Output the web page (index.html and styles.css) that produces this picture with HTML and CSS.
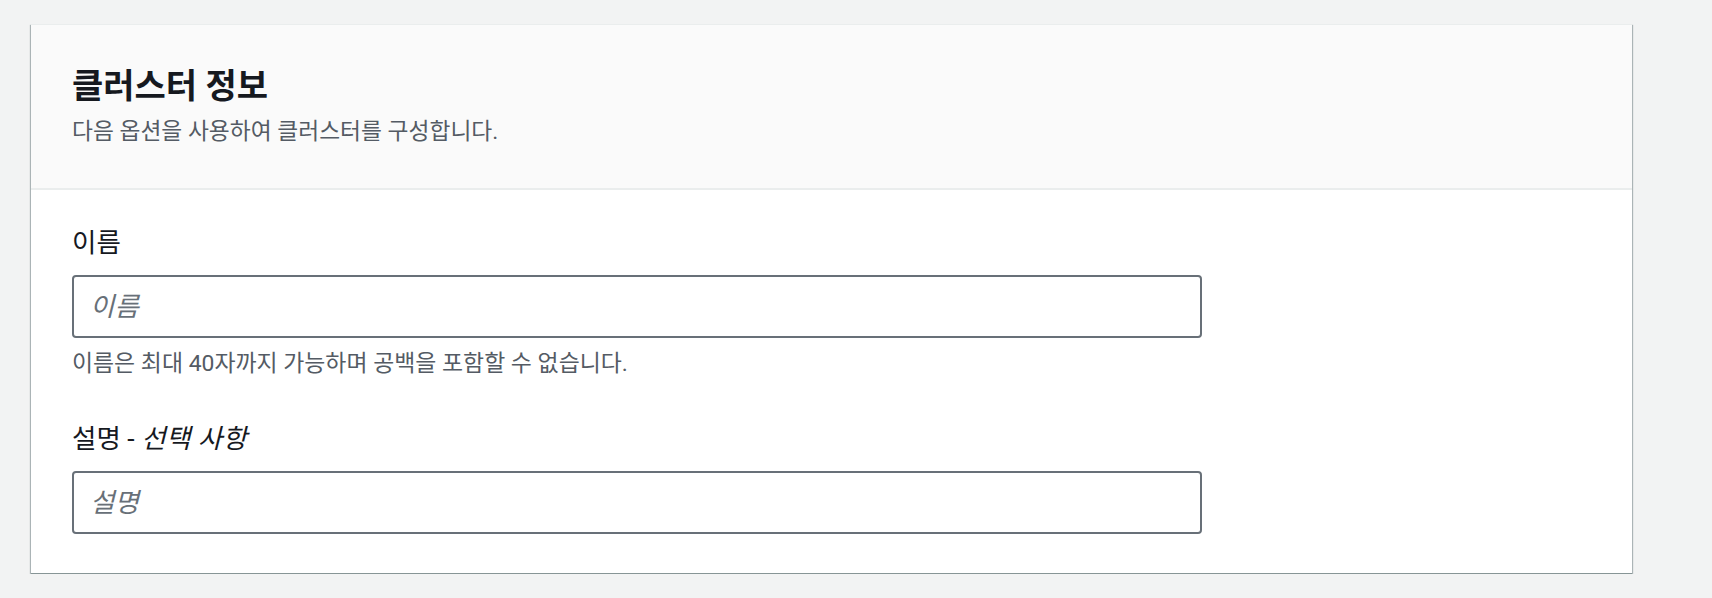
FILE: index.html
```html
<!DOCTYPE html>
<html lang="ko">
<head>
<meta charset="utf-8">
<title>클러스터 정보</title>
<link rel="stylesheet" href="styles.css">
</head>
<body>
<div class="page">
  <section class="card">
    <header class="card-header">
      <h2 class="card-title">클러스터 정보</h2>
      <p class="card-desc">다음 옵션을 사용하여 클러스터를 구성합니다.</p>
    </header>
    <div class="card-body">
      <div class="field">
        <label class="field-label" for="name">이름</label>
        <input class="field-input" id="name" type="text" placeholder="이름">
        <p class="field-hint">이름은 최대 40자까지 가능하며 공백을 포함할 수 없습니다.</p>
      </div>
      <div class="field field-second">
        <label class="field-label" for="desc">설명 - <i class="optional">선택 사항</i></label>
        <input class="field-input" id="desc" type="text" placeholder="설명">
      </div>
    </div>
  </section>
</div>
</body>
</html>
```
FILE: styles.css
```css
html, body {
  margin: 0;
  padding: 0;
  background: #f2f3f3;
}
body {
  font-family: Roboto, "Noto Sans CJK KR", sans-serif;
  color: #16191f;
}
.page {
  padding: 24px 0 0 31px;
}
.card {
  width: 1601px;
  background: #ffffff;
  border-top: 1px solid #eaeded;
  border-bottom: 1px solid #879596;
  box-shadow: 0 1px 1px 0 rgba(0, 28, 36, 0.3), 1px 1px 1px 0 rgba(0, 28, 36, 0.25), -1px 1px 1px 0 rgba(0, 28, 36, 0.25);
}
.card-header {
  background: #fafafa;
  border-bottom: 2px solid #eaeded;
  padding: 41px 41px 0 41px;
  height: 122px;
}
.card-title {
  margin: 0;
  font-size: 34px;
  line-height: 40px;
  font-weight: 700;
  color: #16191f;
}
.card-desc {
  margin: 12px 0 0 0;
  font-size: 22.75px;
  line-height: 28px;
  color: #545b64;
}
.card-body {
  padding: 37px 41px 39px 41px;
}
.field {
  display: flex;
  flex-direction: column;
  align-items: flex-start;
}
.field-second {
  margin-top: 45px;
}
.field-label {
  font-size: 26.5px;
  line-height: 32px;
  color: #16191f;
}
.optional {
  font-style: italic;
  letter-spacing: 0.4px;
}
.field-input {
  box-sizing: border-box;
  margin-top: 16px;
  width: 1130px;
  height: 63px;
  padding: 0 16px;
  border: 2px solid #687078;
  border-radius: 4px;
  background: #ffffff;
  font-family: Roboto, "Noto Sans CJK KR", sans-serif;
  font-size: 26.5px;
  color: #16191f;
  outline: none;
}
.field-input::placeholder {
  color: #687078;
  font-style: italic;
}
.field-hint {
  margin: 12px 0 0 0;
  font-size: 22.9px;
  line-height: 28px;
  color: #545b64;
}
```
